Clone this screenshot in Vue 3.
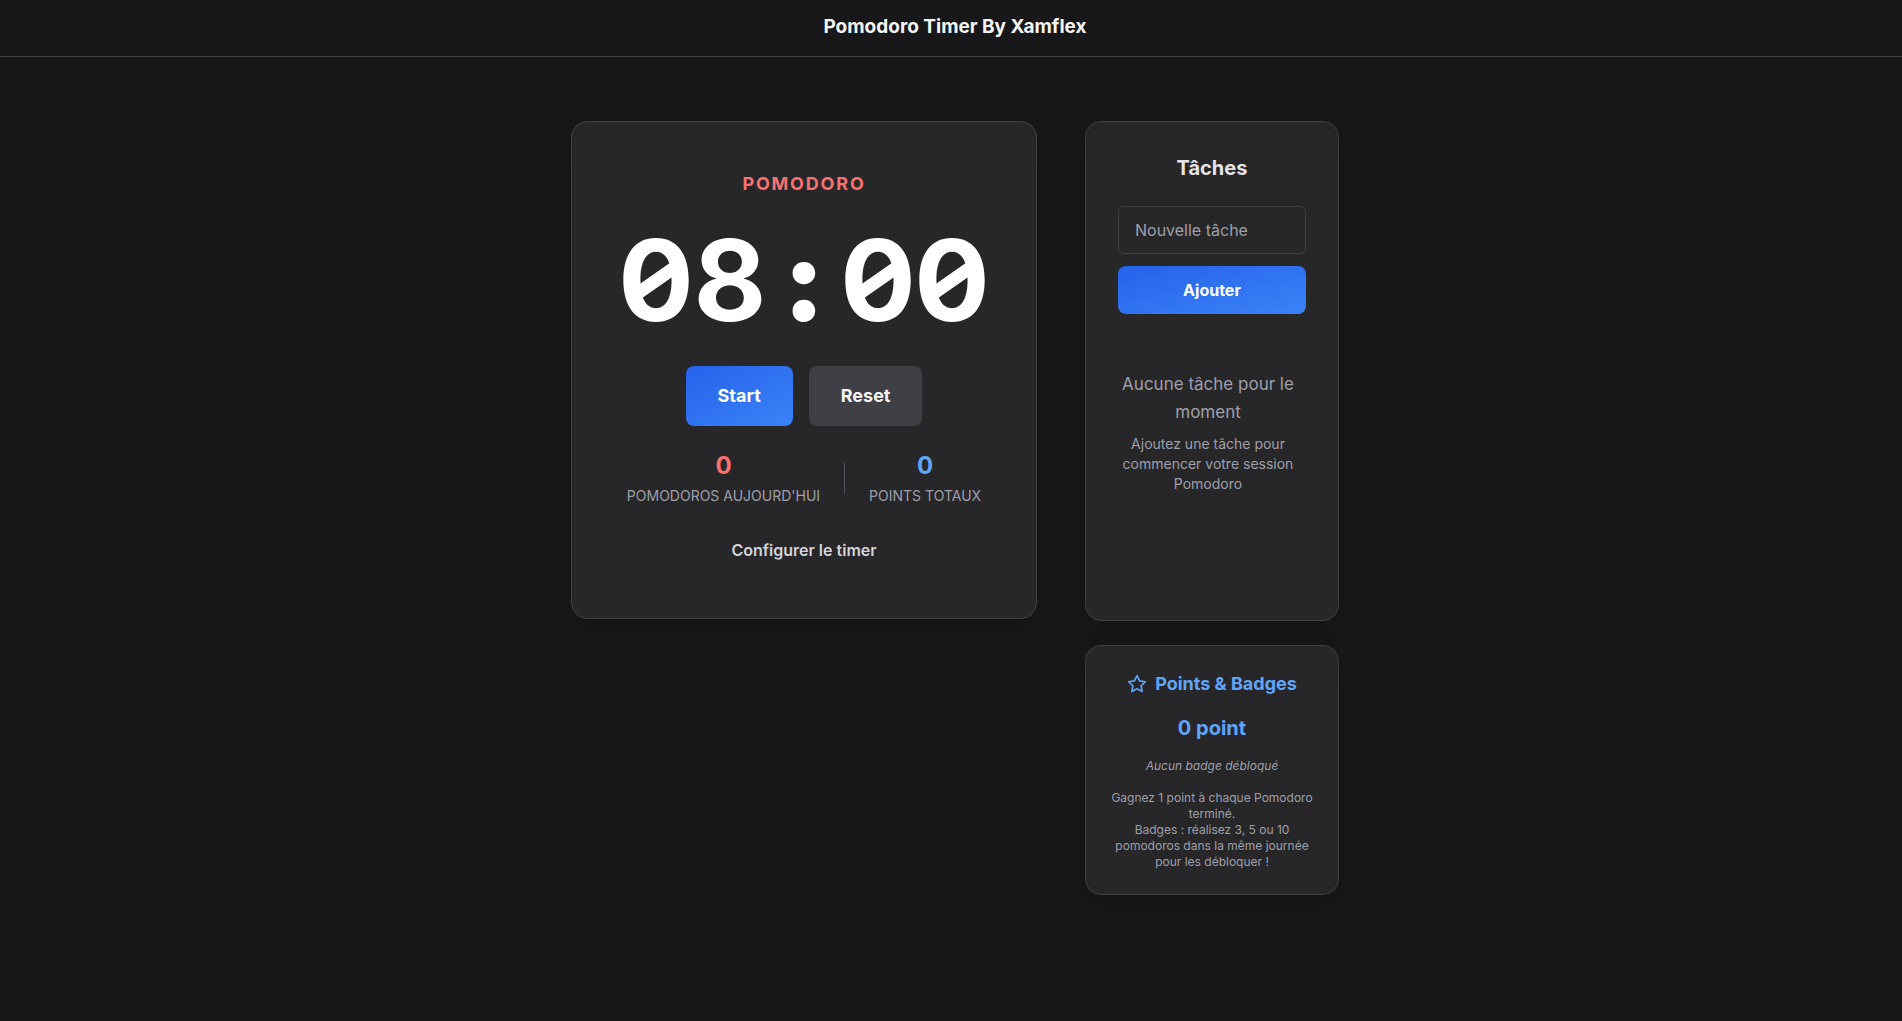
<script setup>
import { ref, computed } from 'vue'

const secondsLeft = ref(480)
const running = ref(false)
const newTask = ref('')

const clock = computed(() => {
  const m = String(Math.floor(secondsLeft.value / 60)).padStart(2, '0')
  const s = String(secondsLeft.value % 60).padStart(2, '0')
  return [...`${m}:${s}`]
})
</script>

<template>
  <div class="page">
    <header class="header">
      <h1>Pomodoro Timer By Xamflex</h1>
    </header>

    <main class="layout">
      <section class="card timer">
        <p class="mode">Pomodoro</p>
        <div class="clock" role="timer">
          <span
            v-for="(char, i) in clock"
            :key="i"
            :class="{ zero: char === '0', colon: char === ':' }"
          >{{ char }}</span>
        </div>
        <div class="controls">
          <button type="button" class="btn primary" @click="running = !running">Start</button>
          <button type="button" class="btn neutral">Reset</button>
        </div>
        <div class="stats">
          <div class="stat red">
            <strong>0</strong>
            <span>Pomodoros aujourd'hui</span>
          </div>
          <div class="divider"></div>
          <div class="stat blue">
            <strong>0</strong>
            <span>Points totaux</span>
          </div>
        </div>
        <button type="button" class="configure">Configurer le timer</button>
      </section>

      <aside class="side">
        <section class="card tasks">
          <h2>Tâches</h2>
          <form class="task-form" @submit.prevent>
            <input v-model="newTask" type="text" placeholder="Nouvelle tâche" aria-label="Nouvelle tâche" />
            <button type="submit" class="primary">Ajouter</button>
          </form>
          <div class="task-list">
            <p class="empty-title">Aucune tâche pour le moment</p>
            <p class="empty-hint">Ajoutez une tâche pour commencer votre session Pomodoro</p>
          </div>
        </section>

        <section class="card badges">
          <h2>
            <svg viewBox="0 0 24 24" width="20" height="20" aria-hidden="true">
              <polygon points="12 2 15.09 8.26 22 9.27 17 14.14 18.18 21.02 12 17.77 5.82 21.02 7 14.14 2 9.27 8.91 8.26" />
            </svg>
            Points &amp; Badges
          </h2>
          <p class="total">0 point</p>
          <p class="none">Aucun badge débloqué</p>
          <p class="rules">
            Gagnez 1 point à chaque Pomodoro terminé.<br />
            Badges : réalisez 3, 5 ou 10 pomodoros dans la même journée pour les débloquer !
          </p>
        </section>
      </aside>
    </main>
  </div>
</template>

<style>
body {
  margin: 0;
  background: #18181b;
}
</style>

<style scoped>
.page {
  min-height: 100vh;
  box-sizing: border-box;
  background: #18181b;
  color: #f4f4f5;
  font-family: Inter, 'Liberation Sans', sans-serif;
}
.page * {
  box-sizing: border-box;
}
h1,
h2,
p {
  margin: 0;
}
button,
input {
  font-family: inherit;
}
button {
  border: 0;
  cursor: pointer;
}
.header {
  padding: 13px 0 15px 8px;
  border-bottom: 1px solid #3f3f46;
  text-align: center;
}
.header h1 {
  font-size: 19px;
  line-height: 28px;
  font-weight: 700;
}
.layout {
  display: flex;
  justify-content: center;
  align-items: flex-start;
  gap: 48px;
  padding: 64px 0 64px 8px;
}
.card {
  background: #27272a;
  border: 1px solid #3f3f46;
  border-radius: 16px;
  box-shadow: 0 12px 24px rgba(0, 0, 0, 0.18);
  text-align: center;
}
.timer {
  width: 466px;
  padding: 48px;
  display: flex;
  flex-direction: column;
  align-items: center;
}
.mode {
  color: #f87171;
  font-size: 18px;
  line-height: 28px;
  font-weight: 700;
  letter-spacing: 0.1em;
  text-transform: uppercase;
}
.clock {
  display: flex;
  margin: 18px 0 22px;
  color: #fff;
  font-size: 112px;
  line-height: 128px;
  font-weight: 700;
}
.clock span {
  position: relative;
  width: 74px;
  display: flex;
  justify-content: center;
}
/* bar crossing the counter of each zero */
.clock .zero::after {
  content: '';
  position: absolute;
  top: 58px;
  left: 16px;
  width: 42px;
  height: 13px;
  background: currentColor;
  transform: rotate(-35deg);
}
.clock .colon {
  font-weight: 900;
}
.controls {
  display: flex;
  gap: 16px;
}
.primary {
  background: linear-gradient(to bottom right, #2563eb, #3b82f6);
  color: #fff;
}
.neutral {
  background: #3f3f46;
  color: #f4f4f5;
}
.btn {
  padding: 16px 32px;
  border-radius: 8px;
  font-size: 18px;
  line-height: 28px;
  font-weight: 700;
}
.stats {
  display: flex;
  align-items: center;
  gap: 24px;
  margin: 24px 0;
}
.stat {
  display: flex;
  flex-direction: column;
  gap: 4px;
}
.stat strong {
  font-size: 24px;
  line-height: 32px;
  font-weight: 700;
}
.stat span {
  color: #9f9fa9;
  font-size: 14px;
  line-height: 20px;
  text-transform: uppercase;
}
.red strong {
  color: #f87171;
}
.blue strong {
  color: #60a5fa;
}
.divider {
  width: 1px;
  height: 32px;
  background: #52525b;
}
.configure {
  padding: 8px 24px;
  border-radius: 8px;
  background: transparent;
  box-shadow: 0 1px 2px rgba(0, 0, 0, 0.06);
  color: #d4d4d8;
  font-size: 16px;
  line-height: 24px;
  font-weight: 600;
}
.side {
  width: 254px;
  display: flex;
  flex-direction: column;
  gap: 24px;
}
.tasks {
  padding: 32px;
}
.tasks h2 {
  color: #e4e4e7;
  font-size: 20px;
  line-height: 28px;
  font-weight: 700;
}
.task-form {
  display: flex;
  flex-direction: column;
  gap: 12px;
  margin: 24px 0;
}
.task-form input {
  width: 100%;
  height: 48px;
  padding: 0 16px;
  border: 1px solid #3f3f46;
  border-radius: 6px;
  background: #27272a;
  color: #f4f4f5;
  font-size: 16px;
}
.task-form input::placeholder {
  color: #9f9fa9;
}
.task-form button {
  height: 48px;
  border-radius: 8px;
  font-size: 16px;
  font-weight: 700;
}
.task-list {
  min-height: 250px;
  padding: 32px 8px 0 0;
  color: #9f9fa9;
}
.empty-title {
  font-size: 17px;
  line-height: 28px;
}
.empty-hint {
  margin-top: 8px;
  font-size: 14px;
  line-height: 20px;
}
.badges {
  padding: 24px;
}
.badges h2 {
  display: flex;
  align-items: center;
  justify-content: center;
  gap: 8px;
  color: #60a5fa;
  font-size: 18px;
  line-height: 28px;
  font-weight: 700;
}
.badges svg {
  fill: none;
  stroke: currentColor;
  stroke-width: 2;
  stroke-linecap: round;
  stroke-linejoin: round;
}
.total {
  margin-top: 16px;
  color: #60a5fa;
  font-size: 20px;
  line-height: 28px;
  font-weight: 700;
}
.none,
.rules {
  margin-top: 16px;
  color: #9f9fa9;
  font-size: 12px;
  line-height: 16px;
}
.none {
  font-style: italic;
}
</style>
